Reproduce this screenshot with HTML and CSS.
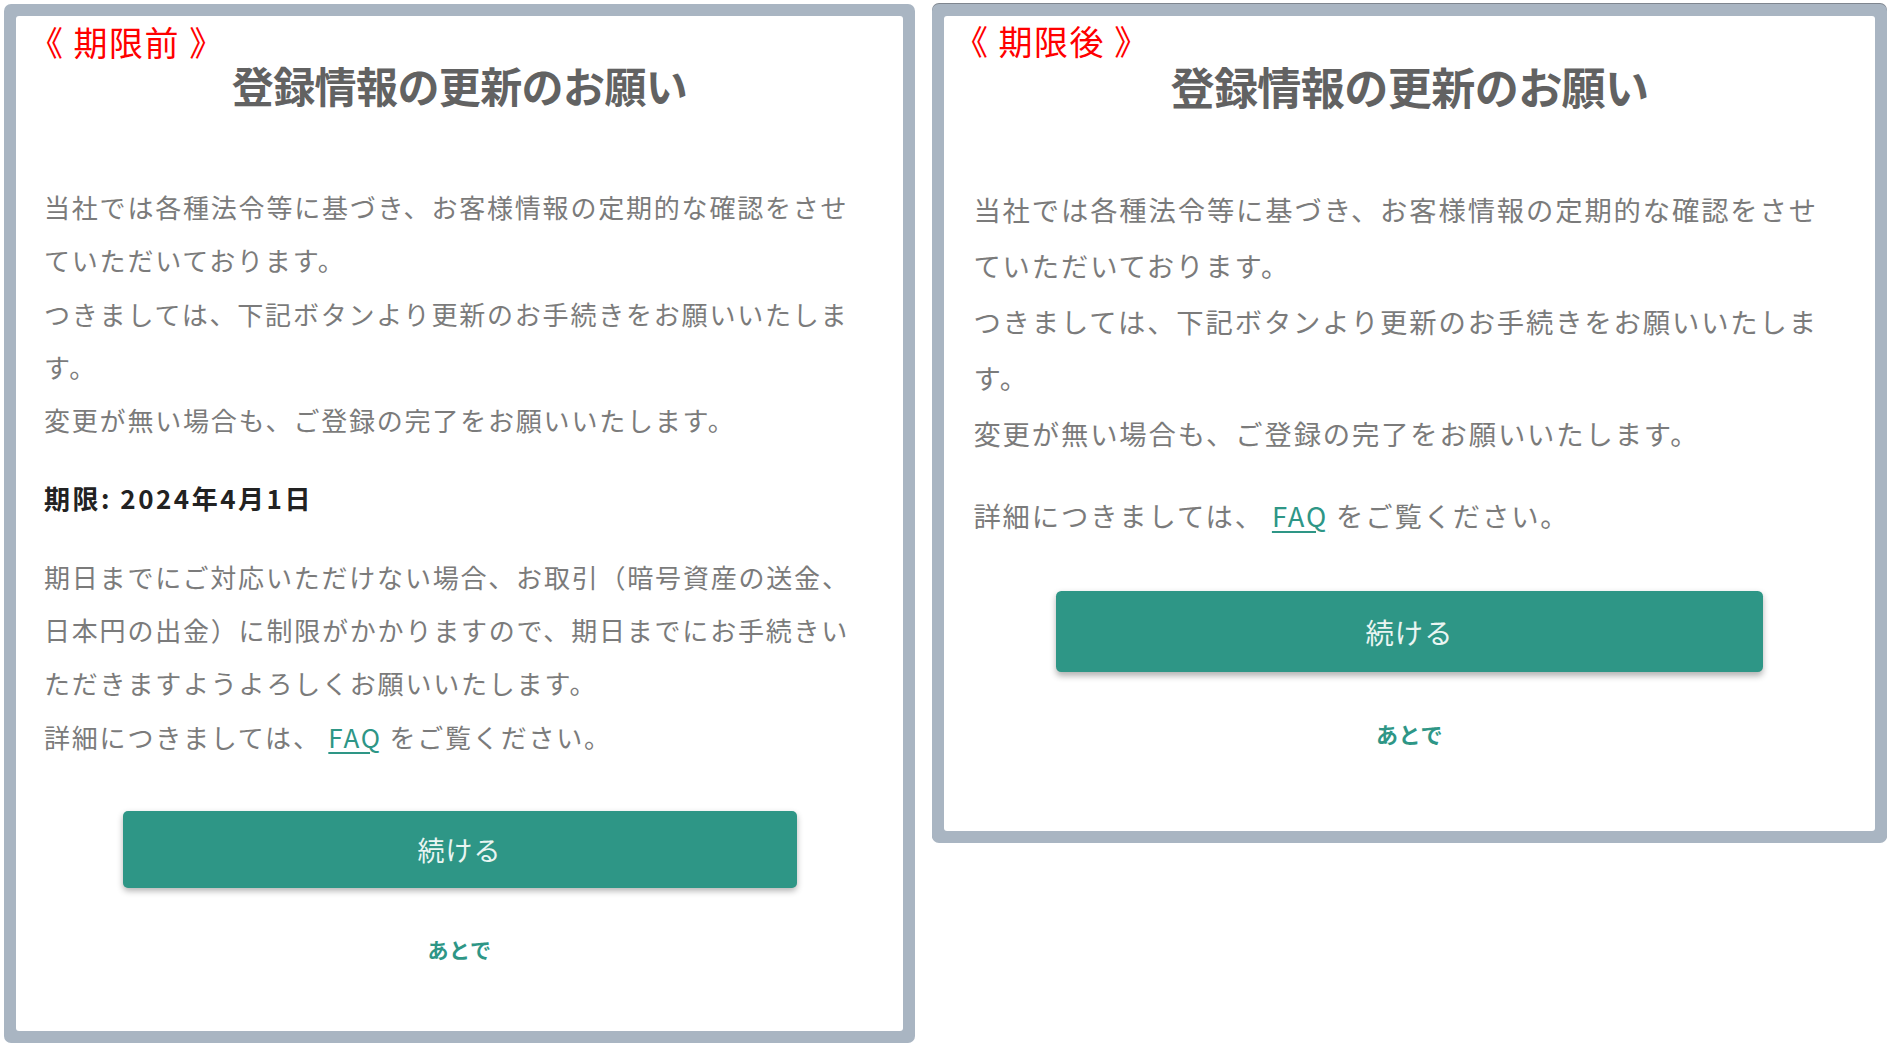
FILE: index.html
```html
<!DOCTYPE html>
<html lang="ja">
<head>
    <meta charset="UTF-8">
    <meta name="viewport" content="width=device-width, initial-scale=1.0">
    <title>登録情報の更新のお願い</title>
    <link rel="stylesheet" href="styles.css">
</head>
<body>
    <div class="compare">
        <section class="panel panel-before">
            <div class="sheet">
                <span class="tag">《 期限前 》</span>
                <div class="notice">
                    <h2 class="notice-title">登録情報の更新のお願い</h2>
                    <p>当社では各種法令等に基づき、お客様情報の定期的な確認をさせていただいております。<br>つきましては、下記ボタンより更新のお手続きをお願いいたします。<br>変更が無い場合も、ご登録の完了をお願いいたします。</p>
                    <p class="deadline">期限: 2024年4月1日</p>
                    <p>期日までにご対応いただけない場合、お取引（暗号資産の送金、日本円の出金）に制限がかかりますので、期日までにお手続きいただきますようよろしくお願いいたします。<br>詳細につきましては、 <a href="#">FAQ</a> をご覧ください。</p>
                    <button type="button" class="btn-continue">続ける</button>
                    <a href="#" class="later">あとで</a>
                </div>
            </div>
        </section>

        <section class="panel panel-after">
            <div class="sheet">
                <span class="tag">《 期限後 》</span>
                <div class="notice">
                    <h2 class="notice-title">登録情報の更新のお願い</h2>
                    <p>当社では各種法令等に基づき、お客様情報の定期的な確認をさせていただいております。<br>つきましては、下記ボタンより更新のお手続きをお願いいたします。<br>変更が無い場合も、ご登録の完了をお願いいたします。</p>
                    <p>詳細につきましては、 <a href="#">FAQ</a> をご覧ください。</p>
                    <button type="button" class="btn-continue">続ける</button>
                    <a href="#" class="later">あとで</a>
                </div>
            </div>
        </section>
    </div>
</body>
</html>
```

FILE: styles.css
```css
body {
    margin: 0;
    background-color: #fff;
    font-family: "Noto Sans CJK JP", "Noto Sans", sans-serif;
}
.compare {
    display: flex;
    align-items: flex-start;
    gap: 17px;
    padding: 4px;
}
.panel {
    box-sizing: border-box;
    padding: 12px;
    border-radius: 7px;
    background-color: #a9b5c2;
}
.panel-before {
    width: 911px;
}
.panel-after {
    width: 955px;
    box-shadow: 0 -1px 0 #7f868f;
}
.sheet {
    position: relative;
    border-radius: 3px;
    background-color: #fff;
}
.tag {
    position: absolute;
    top: 9px;
    left: 13px;
    color: #ff0000;
    font-size: 34px;
    line-height: 1;
    letter-spacing: 1.5px;
    white-space: nowrap;
}
.panel-after .tag {
    top: 8px;
    left: 10px;
}
.notice {
    padding: 41px 28px 67px;
    color: #7b7b7b;
    font-size: 26px;
    line-height: 53.3px;
    letter-spacing: 1.8px;
}
.panel-after .notice {
    zoom: 1.05;
    padding-top: 39px;
    padding-bottom: 77px;
}
.notice-title {
    margin: 0 0 67px;
    color: #626262;
    font-size: 42px;
    line-height: 56px;
    font-weight: 700;
    letter-spacing: -0.6px;
    text-align: center;
}
.panel-after .notice-title {
    margin-bottom: 63px;
}
.notice p {
    max-width: 815px;
    margin: 0;
}
.notice p + p {
    margin-top: 25px;
}
.notice .deadline {
    color: #222;
    font-weight: 700;
    letter-spacing: 2.5px;
}
.notice p a {
    color: #2e9686;
    text-decoration: underline;
    text-underline-offset: 4px;
}
.btn-continue {
    display: block;
    width: 674px;
    height: 77px;
    margin: 48px auto 0;
    border: none;
    border-radius: 5px;
    background-color: #2e9686;
    box-shadow: 0 3px 6px rgba(0, 0, 0, 0.3);
    color: #e9f5f2;
    font-family: inherit;
    font-size: 27px;
    letter-spacing: 1px;
    cursor: pointer;
}
.panel-after .btn-continue {
    margin-top: 45px;
}
.later {
    display: block;
    margin-top: 46px;
    color: #2e9686;
    font-size: 21px;
    font-weight: 700;
    line-height: 30px;
    letter-spacing: 0.5px;
    text-align: center;
    text-decoration: none;
}
.panel-after .later {
    margin-top: 44px;
}
```
